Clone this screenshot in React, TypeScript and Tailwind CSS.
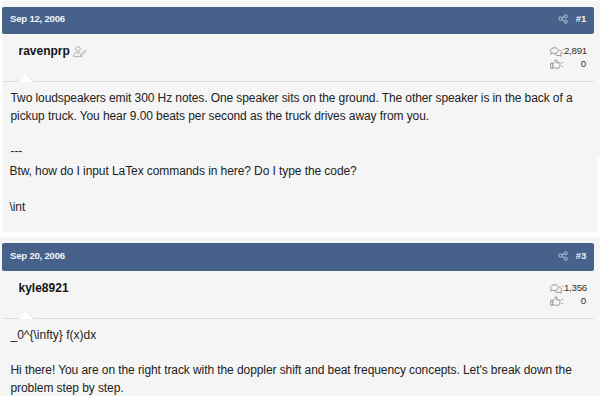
import React from "react";

function ShareIcon() {
  return (
    <svg className="h-[10px] w-[10px]" viewBox="0 0 20 20" fill="none" stroke="#bccadd" strokeWidth="1.9">
      <circle cx="5" cy="9" r="3.4" />
      <circle cx="15.5" cy="4.6" r="3" />
      <circle cx="15.5" cy="15.5" r="3" />
      <path d="M8 7.600 12.800 5.600M7.800 10.800l5.200 3.200" />
    </svg>
  );
}

function UserEditIcon() {
  return (
    <svg className="mt-px h-[11px] w-[14px]" viewBox="0 0 28 22" fill="none" stroke="#b0b0b0" strokeWidth="2" strokeLinejoin="round">
      <circle cx="10" cy="5.8" r="4.6" />
      <path d="M14 13.5c-2-.8-2.400.3-4 .3s-2.300-1-4.500-.3C2.500 14.300 1 16.400 1 19v1.800h17.500" />
      <path d="m15 20.500.7-4 8-8c1-1 3.400 1.300 2.400 2.400l-8 8z" />
    </svg>
  );
}

function CommentsIcon() {
  return (
    <svg className="h-[10px] w-[12px]" viewBox="0 0 24 20" fill="none" stroke="#8e8e8e" strokeWidth="1.9" strokeLinejoin="round">
      <path d="M9 1.500c4.300 0 7.500 2.500 7.500 5.700S13.300 13 9 13c-1.300 0-2.500-.2-3.600-.6C4 13.500 2.500 14 1 14c1-1 1.600-2 1.700-3C1.600 10 1 8.700 1 7.200 1 4 4.700 1.500 9 1.500z" />
      <path d="M18.500 6c2.800.8 4.500 2.800 4.500 5.200 0 1.500-.6 2.800-1.700 3.800.2 1 .7 2 1.700 3.200-1.600 0-3.100-.6-4.400-1.600-4 .9-7.300 0-9.300-2" />
    </svg>
  );
}

function ThumbIcon() {
  return (
    <svg className="-mt-px h-[10px] w-[11px]" preserveAspectRatio="none" viewBox="0 0 22 22" fill="none" stroke="#8e8e8e" strokeWidth="2" strokeLinejoin="round">
      <path d="M1.500 9.500h4v11h-4z" />
      <path d="M5.500 11c3-2 4-4.500 4.500-7 .3-1.500.6-2.500 1.800-2.500 3.200 0 3 3.500 1.200 7h5.500c2.800 0 2.600 3 1 3.700 1.200 1 .6 3-.5 3.200.7 1.200.1 2.500-1 2.800.3 1.500-.4 2.300-2 2.300h-3c-3.500 0-4.500-1.800-7.500-1.800" />
    </svg>
  );
}

type PostHeadProps = { date: string; number: string; user: string; messages: string; editable?: boolean; barClass: string };

function PostHead({ date, number, user, messages, editable, barClass }: PostHeadProps) {
  return (
    <>
      <header className={`ml-[2px] flex w-[592px] items-center justify-between rounded-[2px] bg-[#47628a] px-2 text-[9.6px] font-bold tracking-[-0.22px] text-[#f0f3f7] ${barClass}`}>
        <span>{date}</span>
        <span className="flex items-center gap-[8px]">
          <ShareIcon />
          <span>{number}</span>
        </span>
      </header>
      <div className="ml-[3px] flex h-[48px] w-[591px] justify-between border-b border-[#dcdcdc] pl-[15.5px] pr-[8px] pt-2">
        <div className="flex h-[18px] items-center gap-[3.5px] text-[12px] font-bold leading-[18px] text-[#141414]">
          <span>{user}</span>
          {editable && <UserEditIcon />}
        </div>
        <div className="w-[36px] pt-[3px] text-[9.8px] tracking-[-0.3px] text-[#333]">
          <div className="flex h-[13px] items-center justify-between whitespace-nowrap">
            <span className="flex items-center"><CommentsIcon /><span className="-ml-[0.5px] text-[#777]">:</span></span>
            <span>{messages}</span>
          </div>
          <div className="flex h-[13px] items-center justify-between">
            <span className="flex items-center"><ThumbIcon /><span className="text-[#777]">:</span></span>
            <span>0</span>
          </div>
        </div>
      </div>
      <div className="relative h-0">
        <svg className="absolute -top-[8px] left-[19px] h-[8px] w-[15px]" viewBox="0 0 15 8">
          <path d="M0 8 7.500.5 15 8z" fill="#fff" />
          <path d="M7.500.5 14.500 7.500" stroke="#dfdfdf" fill="none" />
        </svg>
      </div>
    </>
  );
}

export default function App() {
  return (
    <main className="h-[400px] w-[600px] overflow-hidden bg-white pt-px font-['Liberation_Sans',Arial,sans-serif]">
      <article>
        <div className="ml-[2px] h-[157px] w-[598px] bg-[#f5f5f5] pt-[6px]">
          <div className="-ml-[2px]">
            <PostHead date="Sep 12, 2006" number="#1" user="ravenprp" messages="2,891" editable barClass="h-[27px] pb-[3px]" />
          </div>
          <div className="whitespace-nowrap pl-[8.5px] pt-[7px] text-[12px] leading-[18px] tracking-[-0.09px] text-[#222]">
            <p>Two loudspeakers emit 300 Hz notes. One speaker sits on the ground. The other speaker is in the back of a</p>
            <p>pickup truck. You hear 9.00 beats per second as the truck drives away from you.</p>
            <p className="pt-[17px]">---</p>
          </div>
        </div>
        <div className="ml-[3px] h-[74px] w-[594px] bg-[#f5f5f5] pl-[6.5px] pt-[4px] text-[12px] leading-[18px] tracking-[-0.08px] text-[#222]">
          <p>Btw, how do I input LaTex commands in here? Do I type the code?</p>
          <p className="pt-[18px]">\int</p>
        </div>
      </article>
      <article className="mt-[5px] h-[159px] bg-[#f5f5f5] pt-[6px]">
        <PostHead date="Sep 20, 2006" number="#3" user="kyle8921" messages="1,356" barClass="h-[28px] pb-[2px]" />
        <div className="whitespace-nowrap pl-[10.5px] pt-[7px] text-[12px] leading-[18px] tracking-[-0.08px] text-[#222]">
          <p className="tracking-normal">_0^{"{\\infty}"} f(x)dx</p>
          <p className="pt-[17px]">Hi there! You are on the right track with the doppler shift and beat frequency concepts. Let's break down the</p>
          <p>problem step by step.</p>
        </div>
      </article>
    </main>
  );
}
